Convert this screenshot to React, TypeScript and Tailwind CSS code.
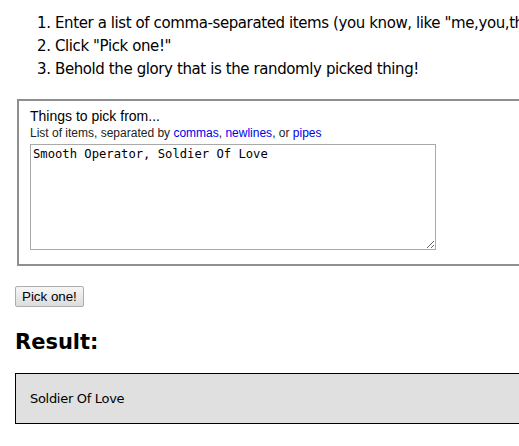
export default function App() {
  const tahoma = { fontFamily: '"DejaVu Sans", Verdana, sans-serif' };
  return (
    <div className="bg-white min-h-[446px] w-[640px] px-[15px] pt-[12px] text-black" >
      <ol className="list-decimal pl-[40px] text-[15px] leading-[23px] tracking-[-0.4px]" style={tahoma}>
        <li>Enter a list of comma-separated items (you know, like "me,you,them")</li>
        <li>Click "Pick one!"</li>
        <li>Behold the glory that is the randomly picked thing!</li>
      </ol>
      <div className="mx-[2px] mt-[18px] border-2 border-[#8f8f8f] pl-[11px] pt-[7px] pb-[14px]" style={{ fontFamily: '"Liberation Sans", Arial, sans-serif' }}>
        <div className="text-[14px] leading-[17px]">Things to pick from...</div>
        <div className="text-[12px] leading-[16px] text-[#222]">
          List of items, separated by <span className="text-[#0000ee]">commas</span>, <span className="text-[#0000ee]">newlines</span>, or <span className="text-[#0000ee]">pipes</span>
        </div>
        <textarea
          className="block mt-[3px] w-[406px] h-[106px] border border-[#a9a9a9] px-[2px] py-[2px] text-[12.2px] leading-[15px] text-black outline-none resize"
          style={{ fontFamily: '"DejaVu Sans Mono", "Liberation Mono", monospace' }}
          defaultValue="Smooth Operator, Soldier Of Love"
        />
      </div>
      <button
        className="mt-[20px] h-[21px] px-[6px] border border-[#adadad] rounded-[2px] bg-gradient-to-b from-[#f6f6f6] to-[#dcdcdc] text-[13.33px] leading-[17px] text-black"
        style={{ fontFamily: '"Liberation Sans", Arial, sans-serif' }}
      >
        Pick one!
      </button>
      <h2 className="mt-[22px] text-[21px] font-bold leading-[26px]" style={tahoma}>Result:</h2>
      <div className="mt-[18px] h-[51px] border border-black bg-[#e0e0e0] pl-[14px] flex items-center text-[13px] tracking-[-0.3px]" style={tahoma}>
        Soldier Of Love
      </div>
    </div>
  );
}
